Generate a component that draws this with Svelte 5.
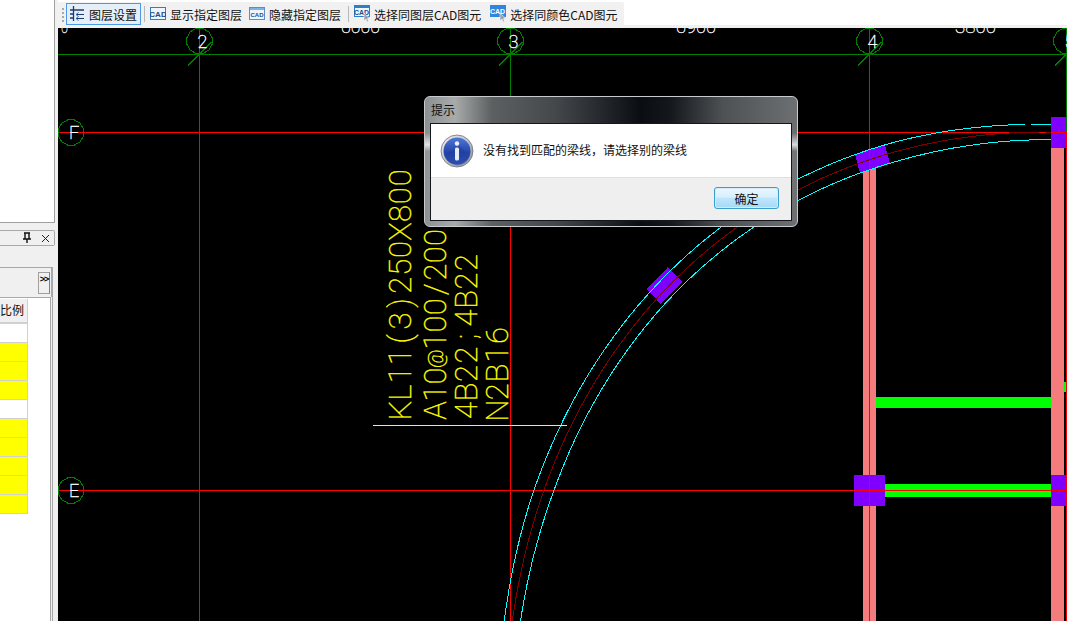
<script>
  const rows = ['w', 'y', 'y', 'y', 'w', 'y', 'y', 'y', 'y', 'y'];

  // axis bubbles are drawn as 12-sided polygons in the CAD view
  function bubble(cx, cy, r) {
    const pts = [];
    for (let i = 0; i < 12; i++) {
      const a = (Math.PI / 6) * i + Math.PI / 12;
      pts.push((cx + r * Math.cos(a)).toFixed(1) + ',' + (cy + r * Math.sin(a)).toFixed(1));
    }
    return pts.join(' ');
  }

  const axesV = [
    { x: 199.5, label: '2' },
    { x: 510.5, label: '3' },
    { x: 869.5, label: '4' },
    { x: 1066.5, label: '5' }
  ];
  const axesH = [
    { y: 132.5, label: 'F' },
    { y: 490.5, label: 'E' }
  ];
  const dims = [
    { x: 61, w: 7, t: '0' },
    { x: 341, w: 39, t: '6000' },
    { x: 676, w: 40, t: '6900' },
    { x: 955, w: 41, t: '3800' }
  ];

  // the CAD font is fixed pitch, so each glyph gets its own slot along the line
  function slots(t, pitch) {
    return t
      .split('')
      .map((_, i) => (6.5 + i * pitch).toFixed(1))
      .join(' ');
  }

  const notes = [
    { x: 411, t: 'KL11(3)250X800', xs: slots('KL11(3)250X800', 17.9) },
    { x: 477, t: '4B22;4B22', xs: slots('4B22;4B22', 18.5) },
    { x: 508, t: 'N2B16', xs: slots('N2B16', 18.75) }
  ];
  const stirrupSlots = slots('A10@100/200', 17.3);

  // centre line of the curved beam as one cubic, fitted to the drawing
  const P = [[510, 640], [543.5, 341], [755, 129], [1051, 132]];
  const smooth = [];
  for (let i = 0; i <= 160; i++) {
    const t = i / 160;
    const u = 1 - t;
    const c = [u * u * u, 3 * u * u * t, 3 * u * t * t, t * t * t];
    smooth.push([
      c[0] * P[0][0] + c[1] * P[1][0] + c[2] * P[2][0] + c[3] * P[3][0],
      c[0] * P[0][1] + c[1] * P[1][1] + c[2] * P[2][1] + c[3] * P[3][1]
    ]);
  }

  function offsetLine(sign) {
    return smooth
      .map((p, i) => {
        const a = smooth[Math.max(i - 1, 0)];
        const b = smooth[Math.min(i + 1, smooth.length - 1)];
        const dx = b[0] - a[0];
        const dy = b[1] - a[1];
        const len = Math.hypot(dx, dy) || 1;
        let d = 9.5;
        if (p[0] > 900) d = 9.5 - (p[0] - 900) / 75;
        if (p[1] > 490) d = 9.5 - (p[1] - 490) / 90;
        return (p[0] + (sign * d * dy) / len).toFixed(1) + ',' + (p[1] - (sign * d * dx) / len).toFixed(1);
      })
      .join(' ');
  }

  const centre = smooth.map((p) => p[0].toFixed(1) + ',' + p[1].toFixed(1)).join(' ');
  const upper = offsetLine(-1);
  const lower = offsetLine(1);
</script>

<div class="window">
  <aside class="left">
    <div class="dock"></div>
    <div class="caption">
      <svg width="10" height="12" viewBox="0 0 10 12" aria-hidden="true">
        <path d="M2 1h6M3 1v6M7 1v6M1 7h8M5 7v4" stroke="#111" stroke-width="1.4" fill="none" />
      </svg>
      <svg width="9" height="9" viewBox="0 0 9 9" aria-hidden="true">
        <path d="M1 1l7 7M8 1l-7 7" stroke="#222" stroke-width="1" fill="none" />
      </svg>
    </div>
    <div class="panel">
      <div class="tabs"><span class="more">&gt;&gt;</span></div>
      <div class="inner">
        <div class="grid">
          <div class="head">比例</div>
          {#each rows as r}
            <div class="row" class:yellow={r === 'y'}></div>
          {/each}
        </div>
      </div>
    </div>
  </aside>

  <div class="main">
    <div class="topbar">
      <div class="toolbar">
        <span class="grip"></span>
        <button class="tool active">
          <svg class="ico" width="16" height="18" viewBox="0 0 16 18" aria-hidden="true">
            <path d="M4.5 1v15M1 5h14M1 9h4M1 13h4" stroke="#1f3a66" stroke-width="1.3" fill="none" />
            <path d="M15 9.5H7M15 13.5H7" stroke="#1f3a66" fill="none" />
            <path d="M9.5 7.5l-2.5 2 2.5 2M9.5 11.5l-2.5 2 2.5 2" stroke="#3a6fc0" fill="none" />
          </svg>
          图层设置
        </button>
        <span class="sep"></span>
        <button class="tool">
          <svg class="ico" width="16" height="14" viewBox="0 0 16 14" aria-hidden="true">
            <rect x="0.5" y="0.5" width="15" height="12" fill="#eef5fc" stroke="#2f7fc4" />
            <text x="8" y="9.5" class="cad" font-size="8" fill="#1f4e8c">CAD</text>
          </svg>
          显示指定图层
        </button>
        <button class="tool">
          <svg class="ico" width="16" height="14" viewBox="0 0 16 14" aria-hidden="true">
            <rect x="0.5" y="0.5" width="15" height="12" fill="#eef5fc" stroke="#5a8fc0" />
            <rect x="1" y="1" width="14" height="2" fill="#7fb2e0" />
            <text x="8" y="9.5" class="cad" font-size="6" fill="#1f4e8c">CAD</text>
          </svg>
          隐藏指定图层
        </button>
        <span class="sep"></span>
        <button class="tool">
          <svg class="ico" width="16" height="18" viewBox="0 0 16 18" aria-hidden="true">
            <rect x="0.5" y="0.5" width="15" height="11" fill="#eef5fc" stroke="#2f7fc4" />
            <rect x="1" y="1" width="14" height="2" fill="#2f7fc4" />
            <text x="7.5" y="10" class="cad" font-size="7" fill="#1f4e8c">CAD</text>
            <path d="M10 8v8l2-2 1 3 1.5-.5-1-3h2.5z" fill="#9aa4b0" stroke="#fff" stroke-width=".5" />
          </svg>
          选择同图层CAD图元
        </button>
        <button class="tool last">
          <svg class="ico" width="16" height="18" viewBox="0 0 16 18" aria-hidden="true">
            <rect x="0" y="0" width="16" height="12" fill="#2f86dc" />
            <text x="7.5" y="9" class="cad" font-size="7" fill="#fff">CAD</text>
            <path d="M10 8v8l2-2 1 3 1.5-.5-1-3h2.5z" fill="#9aa4b0" stroke="#fff" stroke-width=".5" />
          </svg>
          选择同颜色CAD图元
        </button>
      </div>
    </div>

    <div class="canvas">
      <svg class="cadview" width="1009" height="593" viewBox="58 28 1009 593">
        <!-- columns and walls -->
        <rect x="863" y="165" width="13" height="456" fill="#f47c7c" />
        <rect x="1051" y="148" width="13" height="473" fill="#f47c7c" />
        <rect x="876" y="397" width="175" height="11" fill="#00ff00" />
        <rect x="885" y="484" width="166" height="13" fill="#00ff00" />
        <rect x="1064" y="382" width="2" height="10" fill="#00ff00" />
        <rect x="854" y="475" width="31" height="31" fill="#7f00ff" />
        <rect x="1051" y="475" width="15" height="31" fill="#7f00ff" />
        <rect x="1051" y="117" width="15" height="31" fill="#7f00ff" />
        <polygon points="855,154.3 885,145.3 890,164 860,173.3" fill="#7f00ff" class="crisp" />
        <polygon points="667.7,267.3 682.7,282.3 660.7,304 646.7,289" fill="#7f00ff" class="crisp" />

        <!-- axis lines -->
        <line x1="58" y1="54.5" x2="1067" y2="54.5" stroke="#008000" />
        {#each axesV as a}
          <line x1={a.x} y1="28" x2={a.x} y2="132" stroke="#008000" />
          <line x1={a.x} y1="132" x2={a.x} y2="621" stroke="#ff0000" />
          <polygon points={bubble(a.x, 41, 13)} fill="none" stroke="#008000" class="crisp" />
          <line x1={a.x - 11.5} y1="65.5" x2={a.x + 12} y2="42" stroke="#008000" class="crisp" />
          <text x={a.x - 2} y="47.5" class="axis">{a.label}</text>
        {/each}
        {#each axesH as a}
          <line x1="58" y1={a.y} x2="1067" y2={a.y} stroke="#ff0000" />
          <polygon points={bubble(71, a.y, 13)} fill="none" stroke="#008000" class="crisp" />
          <text x="69" y={a.y + 6.5} class="axis">{a.label}</text>
        {/each}

        <!-- curved beam -->
        <polyline points={upper} fill="none" stroke="#00ffff" class="crisp" />
        <polyline points={lower} fill="none" stroke="#00ffff" class="crisp" />
        <polyline points={centre} fill="none" stroke="#800000" class="crisp" />
        <rect x="1025" y="122" width="6" height="5" fill="#000" />

        {#each dims as d}
          <text x={d.x} y="33" class="dim" textLength={d.w} lengthAdjust="spacingAndGlyphs">{d.t}</text>
        {/each}

        <!-- beam annotation -->
        {#each notes as n}
          <text transform="translate({n.x} 417) rotate(-90)" x={n.xs} class="note">{n.t}</text>
        {/each}
        <text transform="translate(446 417) rotate(-90)" x={stirrupSlots} class="note">A10<tspan class="at" dy="-3">@</tspan><tspan dy="3">100/200</tspan></text>
        <line x1="373" y1="425.5" x2="567" y2="425.5" stroke="#ffff00" />
      </svg>

      <div class="dialog" role="dialog" aria-modal="true">
        <div class="title">提示</div>
        <div class="client">
          <div class="message">
            <svg width="34" height="34" viewBox="0 0 34 34" aria-hidden="true">
              <defs>
                <linearGradient id="ring" x1="0" y1="0" x2="1" y2="1">
                  <stop offset="0" stop-color="#f4f4f4" />
                  <stop offset="1" stop-color="#8a8f98" />
                </linearGradient>
                <linearGradient id="ball" x1="0" y1="0" x2="0" y2="1">
                  <stop offset="0" stop-color="#4f78d8" />
                  <stop offset="0.55" stop-color="#2445a8" />
                  <stop offset="1" stop-color="#3a5cc0" />
                </linearGradient>
              </defs>
              <circle cx="17" cy="17" r="16" fill="url(#ring)" stroke="#6d7278" stroke-width=".8" />
              <circle cx="17" cy="17" r="13.5" fill="url(#ball)" />
              <path d="M4 21a13.5 13.5 0 0 0 26 1L20 12z" fill="#1c3c9c" opacity=".45" />
              <circle cx="17" cy="9.5" r="2.2" fill="#eef2fb" />
              <rect x="15" y="13.5" width="4" height="13" rx="1.6" fill="#e8ecf6" />
            </svg>
            <span class="text">没有找到匹配的梁线，请选择别的梁线</span>
          </div>
          <div class="actions">
            <button class="ok">确定</button>
          </div>
        </div>
      </div>
    </div>
  </div>
</div>

<style>
  :global(body) {
    margin: 0;
    background: #fff;
  }

  .window {
    display: flex;
    width: 1067px;
    height: 621px;
    overflow: hidden;
    font-family: "Noto Sans CJK SC", "Liberation Sans", sans-serif;
    font-size: 12px;
    color: #111;
  }

  .left {
    width: 58px;
    flex: none;
    display: flex;
    flex-direction: column;
    background: #f0f0f0;
  }

  .dock {
    width: 55px;
    height: 223px;
    flex: none;
    box-sizing: border-box;
    background: #fff;
    border-right: 1px solid #a0a0a0;
    border-bottom: 1px solid #a0a0a0;
  }

  .caption {
    width: 55px;
    height: 16px;
    margin-top: 7px;
    flex: none;
    box-sizing: border-box;
    display: flex;
    align-items: center;
    justify-content: flex-end;
    gap: 9px;
    padding-right: 4px;
    border: 1px solid #a8a8a8;
    border-left: none;
    border-radius: 0 2px 2px 0;
  }

  .panel {
    width: 53px;
    margin-top: 21px;
    flex: 1;
    box-sizing: border-box;
    display: flex;
    flex-direction: column;
    border-top: 1px solid #a8a8a8;
    border-right: 1px solid #a8a8a8;
  }

  .tabs {
    height: 29px;
    flex: none;
    box-sizing: border-box;
    padding: 4px 1px 3px 0;
    display: flex;
    justify-content: flex-end;
    border-right: 1px solid #a8a8a8;
  }

  .more {
    width: 12px;
    box-sizing: border-box;
    border: 1px solid #a0a0a0;
    border-right-color: #808080;
    font: bold 9px/12px "Liberation Sans", sans-serif;
    text-align: center;
    letter-spacing: -1px;
    color: #000;
  }

  .inner {
    flex: 1;
    background: #fff;
    margin-right: 1px;
    border-top: 1px solid #a8a8a8;
    border-right: 1px solid #a8a8a8;
    padding-top: 1px;
  }

  .grid {
    width: 28px;
  }

  .head {
    height: 25px;
    box-sizing: border-box;
    line-height: 22px;
    font-size: 12px;
    text-align: right;
    padding-right: 5px;
    white-space: nowrap;
    overflow: hidden;
    background: #f0f0f0;
    border-bottom: 2px solid #d0d0d0;
    border-right: 1px solid #d0d0d0;
  }

  .row {
    height: 19px;
    box-sizing: border-box;
    background: #fff;
    border-bottom: 1px solid #d0d0d0;
    border-right: 1px solid #d0d0d0;
  }

  .row.yellow {
    background: #ffff00;
  }

  .main {
    flex: 1;
    display: flex;
    flex-direction: column;
    min-width: 0;
  }

  .topbar {
    height: 28px;
    flex: none;
    box-sizing: border-box;
    padding-top: 2px;
    background: linear-gradient(#fff 25px, #f0f0f0 25px);
  }

  .toolbar {
    width: 566px;
    height: 26px;
    box-sizing: border-box;
    display: flex;
    align-items: flex-start;
    padding: 1px 0 0 4px;
    background: #f1f1f1;
    border-radius: 2px 2px 0 0;
  }

  .grip {
    width: 2px;
    height: 14px;
    margin: 5px 2px 0 0;
    background: repeating-linear-gradient(#a8a8a8 0 2px, transparent 2px 4px);
  }

  .tool {
    height: 22px;
    display: flex;
    align-items: center;
    gap: 4px;
    padding: 0 3px 0 2px;
    margin: 0;
    border: 1px solid transparent;
    background: none;
    font: inherit;
    color: inherit;
    white-space: nowrap;
    box-sizing: border-box;
  }

  .tool.last {
    margin-left: 2px;
  }

  .tool.active {
    width: 75px;
    background: #e4effa;
    border-color: #4a9ae8;
  }

  .ico {
    flex: none;
  }

  .cad {
    font-family: "Liberation Sans", sans-serif;
    font-weight: 700;
    text-anchor: middle;
  }

  .sep {
    width: 1px;
    height: 16px;
    margin: 3px 2px 0 3px;
    background: #b8b8b8;
  }

  .canvas {
    flex: 1;
    position: relative;
    background: #000;
    overflow: hidden;
  }

  .cadview {
    display: block;
  }

  .crisp {
    shape-rendering: crispEdges;
  }

  .axis {
    font-family: Roboto, "DejaVu Sans", sans-serif;
    font-weight: 100;
    font-size: 18px;
    fill: #fff;
    stroke: #fff;
    stroke-width: 0.4;
  }

  .dim {
    font-family: Roboto, "DejaVu Sans", sans-serif;
    font-weight: 100;
    font-size: 17px;
    fill: #fff;
    stroke: #fff;
    stroke-width: 0.3;
  }

  .note {
    font-family: Roboto, "DejaVu Sans", sans-serif;
    font-weight: 100;
    font-size: 31px;
    text-anchor: middle;
    fill: #ffff00;
    stroke: #ffff00;
    stroke-width: 0.4;
  }

  .at {
    font-size: 20px;
  }

  .dialog {
    position: absolute;
    left: 366px;
    top: 68px;
    width: 374px;
    height: 131px;
    box-sizing: border-box;
    padding: 0 5px 5px 5px;
    display: flex;
    flex-direction: column;
    border: 1px solid #c8cbce;
    border-radius: 6px;
    background:
      linear-gradient(180deg, transparent 28%, rgba(255, 255, 255, 0.75) 37%, rgba(255, 255, 255, 0.05) 42%, transparent 100%),
      linear-gradient(90deg, #8d9091 0%, #a9abab 8%, #5d6062 18%, #44484b 35%, #0a0d12 58%, #14181c 66%, #4d5154 80%, #6d7072 100%);
  }

  .title {
    height: 26px;
    flex: none;
    line-height: 26px;
    padding-left: 1px;
    font-size: 12px;
    color: #111;
  }

  .client {
    flex: 1;
    display: flex;
    flex-direction: column;
    background: #fff;
    border: 1px solid #14181c;
  }

  .message {
    height: 53px;
    flex: none;
    box-sizing: border-box;
    display: flex;
    align-items: center;
    gap: 9px;
    padding-left: 9px;
    color: #111;
  }

  .text {
    margin-bottom: 3px;
  }

  .actions {
    flex: 1;
    display: flex;
    justify-content: flex-end;
    align-items: flex-start;
    padding: 9px 12px 0 0;
    background: #efefef;
    border-top: 1px solid #dfdfdf;
  }

  .ok {
    width: 65px;
    height: 22px;
    padding: 0;
    font: inherit;
    color: #111;
    border: 1px solid #3a9fcb;
    border-radius: 3px;
    background: linear-gradient(#eaf6fd 0%, #d9f0fc 45%, #bee6fd 50%, #a7d9f5 100%);
    box-shadow: inset 0 0 0 1px #d5ecf8;
  }
</style>
